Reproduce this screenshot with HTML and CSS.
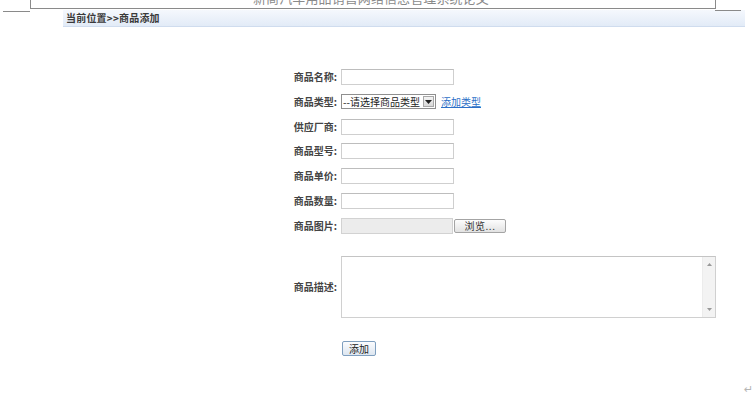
FILE: index.html
```html
<!DOCTYPE html>
<html lang="zh">
<head>
<meta charset="utf-8">
<title>商品添加</title>
<link rel="stylesheet" href="styles.css">
</head>
<body>
<div class="page">
  <div class="frame">
    <div class="title">新商汽车用品销售网络信息管理系统论文</div>
  </div>
  <span class="mark mark-left"></span>
  <span class="mark mark-right"></span>

  <div class="crumb">当前位置&gt;&gt;商品添加</div>

  <div class="form">
    <div class="row">
      <label class="lbl">商品名称:</label>
      <div class="ctl"><span class="input"></span></div>
    </div>
    <div class="row">
      <label class="lbl">商品类型:</label>
      <div class="ctl">
        <span class="select"><span class="sel-text">--请选择商品类型</span><span class="sel-arrow"><svg width="7" height="4" viewBox="0 0 7 4"><path d="M0 0H7L3.5 4Z" fill="#222"/></svg></span></span>
        <a class="link" href="#">添加类型</a>
      </div>
    </div>
    <div class="row">
      <label class="lbl">供应厂商:</label>
      <div class="ctl"><span class="input"></span></div>
    </div>
    <div class="row">
      <label class="lbl">商品型号:</label>
      <div class="ctl"><span class="input"></span></div>
    </div>
    <div class="row">
      <label class="lbl">商品单价:</label>
      <div class="ctl"><span class="input"></span></div>
    </div>
    <div class="row">
      <label class="lbl">商品数量:</label>
      <div class="ctl"><span class="input"></span></div>
    </div>
    <div class="row">
      <label class="lbl">商品图片:</label>
      <div class="ctl"><span class="filebox"></span><span class="browse">浏览...</span></div>
    </div>
    <div class="row row-area">
      <label class="lbl">商品描述:</label>
      <div class="ctl">
        <div class="textarea">
          <div class="ta-body"></div>
          <div class="ta-scroll">
            <svg width="5" height="3" viewBox="0 0 5 3"><path d="M0 3H5L2.5 0Z" fill="#999"/></svg>
            <svg width="5" height="3" viewBox="0 0 5 3"><path d="M0 0H5L2.5 3Z" fill="#999"/></svg>
          </div>
        </div>
      </div>
    </div>
    <div class="row row-btn">
      <span class="lbl"></span>
      <div class="ctl"><span class="btn">添加</span></div>
    </div>
  </div>

  <div class="ret">↵</div>
</div>
</body>
</html>
```

FILE: styles.css
```css
html, body {
  margin: 0;
  padding: 0;
  background: #ffffff;
}
body {
  font-family: "Noto Sans CJK SC", "Noto Sans", sans-serif;
  color: #333;
  width: 756px;
  height: 399px;
  overflow: hidden;
}
.page {
  position: relative;
  width: 756px;
  height: 399px;
}
.frame {
  margin-left: 30px;
  width: 684px;
  height: 8px;
  border-left: 1px solid #8a8a8a;
  border-right: 1px solid #8a8a8a;
  border-bottom: 1px solid #8a8a8a;
  position: relative;
  overflow: hidden;
}
.title {
  position: absolute;
  left: 222px;
  top: -10px;
  font-size: 13px;
  line-height: 16px;
  color: #8a8a8a;
  letter-spacing: 0.1px;
  white-space: nowrap;
}
.mark {
  position: absolute;
  height: 1px;
  background: #8a8a8a;
}
.mark-left {
  left: 3px;
  top: 11px;
  width: 27px;
}
.mark-right {
  left: 715px;
  top: 10px;
  width: 26px;
}
.crumb {
  margin: 1px 0 0 63px;
  width: 679px;
  height: 16px;
  padding-left: 3px;
  background: linear-gradient(#f5f8fd, #e2ebf7);
  border-bottom: 1px solid #cfdcee;
  font-size: 10px;
  font-weight: bold;
  line-height: 16px;
  color: #3a3a3a;
  letter-spacing: 0.2px;
  white-space: nowrap;
}
.form {
  margin-top: 42px;
  display: flex;
  flex-direction: column;
}
.row {
  display: flex;
  align-items: center;
  height: 16px;
  margin-bottom: 8.8px;
}
.lbl {
  width: 337px;
  text-align: right;
  font-size: 10px;
  font-weight: bold;
  color: #444;
  line-height: 16px;
  white-space: nowrap;
}
.ctl {
  margin-left: 4px;
  display: flex;
  align-items: center;
}
.input {
  display: block;
  width: 111px;
  height: 14px;
  border: 1px solid #cfcfcf;
  border-top-color: #bdbdbd;
  background: #fff;
}
.select {
  display: flex;
  align-items: center;
  width: 93px;
  height: 13px;
  border: 1px solid #8f8f8f;
  background: #fff;
}
.sel-text {
  flex: 1;
  font-size: 10px;
  line-height: 13px;
  padding-left: 1px;
  color: #222;
  white-space: nowrap;
  overflow: hidden;
}
.sel-arrow {
  width: 11px;
  height: 11px;
  margin-right: 1px;
  border: 1px solid #a8a8a8;
  box-sizing: border-box;
  background: linear-gradient(#f4f4f4, #d8d8d8);
  display: flex;
  align-items: center;
  justify-content: center;
}
.link {
  margin-left: 5px;
  font-size: 10px;
  color: #2c6fc7;
  text-decoration: underline;
  line-height: 14px;
}
.filebox {
  display: block;
  width: 110px;
  height: 14px;
  border: 1px solid #d2d2d2;
  background: #ececec;
}
.browse {
  margin-left: 1px;
  width: 50px;
  height: 12px;
  border: 1px solid #a4a4a4;
  border-radius: 2px;
  background: linear-gradient(#fdfdfd, #e2e2e2);
  font-size: 10px;
  line-height: 12px;
  text-align: center;
  color: #333;
  letter-spacing: 0.5px;
}
.row-area {
  margin-top: 13.2px;
  height: 62px;
  margin-bottom: 23px;
}
.textarea {
  display: flex;
  width: 373px;
  height: 60px;
  border: 1px solid #d0d0d0;
  border-top-color: #c4c4c4;
  background: #fff;
}
.ta-body {
  flex: 1;
}
.ta-scroll {
  width: 12px;
  background: #f3f3f3;
  border-left: 1px solid #ececec;
  display: flex;
  flex-direction: column;
  justify-content: space-between;
  align-items: center;
  padding: 6px 0 6px;
}
.row-btn {
  height: 16px;
}
.btn {
  margin-left: 1px;
  display: block;
  width: 32px;
  height: 13px;
  border: 1px solid #7f9fbf;
  border-radius: 2px;
  background: linear-gradient(#fbfcfe, #dde6f0);
  font-size: 10px;
  line-height: 13px;
  text-align: center;
  color: #222;
}
.ret {
  position: absolute;
  left: 744px;
  top: 383px;
  font-family: "DejaVu Sans", sans-serif;
  font-size: 11px;
  color: #b5b5b5;
}
```
